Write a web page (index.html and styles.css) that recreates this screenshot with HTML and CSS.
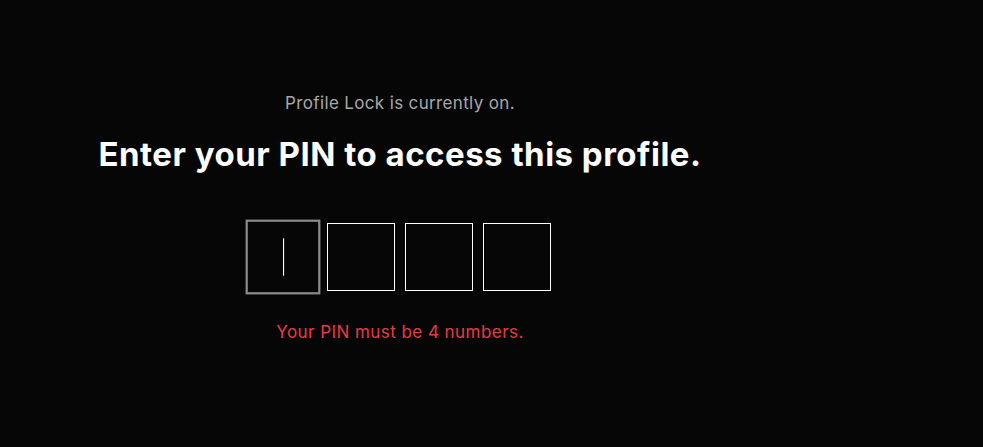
FILE: index.html
```html
<!DOCTYPE html>
<html lang="en">
<head>
  <meta charset="UTF-8" />
  <meta name="viewport" content="width=device-width, initial-scale=1.0"/>
  <title>Profile Lock</title>
  <link rel="stylesheet" href="styles.css">
</head>
<body>
  <div class="profile-gate">
    <div class="lock-status">Profile Lock is currently on.</div>
    <h1 class="pin-title">Enter your PIN to access this profile.</h1>
    <div class="pin-inputs">
      <div class="pin-box active"><span class="caret"></span></div>
      <div class="pin-box"></div>
      <div class="pin-box"></div>
      <div class="pin-box"></div>
    </div>
    <div class="pin-error">Your PIN must be 4 numbers.</div>
  </div>
</body>
</html>
```

FILE: styles.css
```css
body {
  margin: 0;
  background: #060606;
  font-family: Inter, "Liberation Sans", Arial, sans-serif;
}
.profile-gate {
  width: 800px;
  padding-top: 93px;
  text-align: center;
}
.lock-status {
  color: #a8a8a8;
  font-size: 17px;
  line-height: 20px;
  letter-spacing: 0.35px;
}
.pin-title {
  color: #fff;
  font-size: 33px;
  font-weight: 700;
  line-height: 40px;
  letter-spacing: 0.5px;
  margin: 21px 0 0;
}
.pin-inputs {
  display: flex;
  justify-content: center;
  gap: 10px;
  margin-top: 49px;
}
.pin-box {
  width: 68px;
  height: 68px;
  box-sizing: border-box;
  border: 1px solid #fff;
  display: flex;
  align-items: center;
  justify-content: center;
}
.pin-box.active {
  border: 2px solid #8c8c8c;
  transform: scale(1.1);
}
.caret {
  width: 1px;
  height: 34px;
  background: #fff;
}
.pin-error {
  color: #eb3942;
  font-size: 17px;
  line-height: 20px;
  letter-spacing: 0.45px;
  margin-top: 31px;
}
```
